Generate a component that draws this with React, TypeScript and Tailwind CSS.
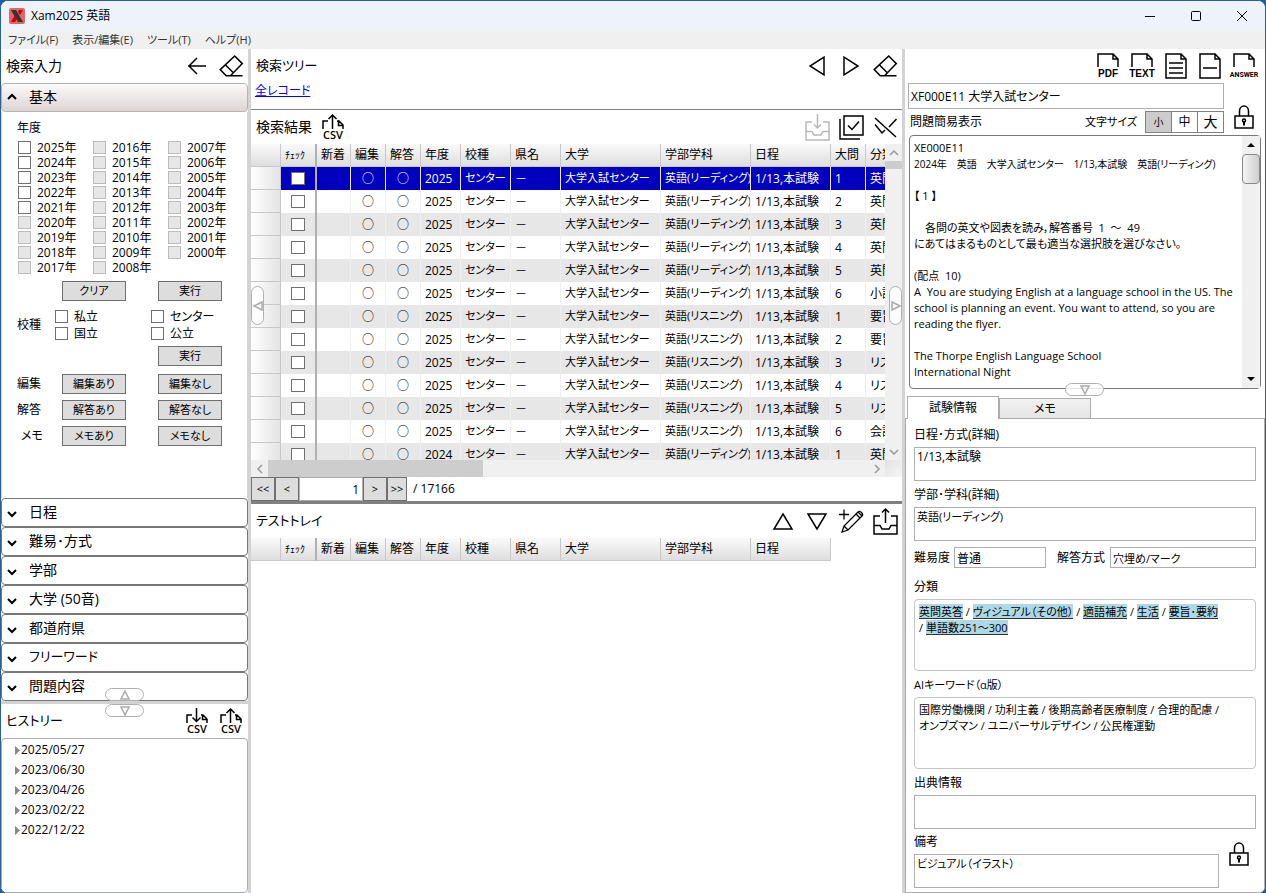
import { useState } from "react";
import type { ReactNode } from "react";
import { clsx } from "clsx";

const YEARS = [
  [2025, 2024, 2023, 2022, 2021, 2020, 2019, 2018, 2017],
  [2016, 2015, 2014, 2013, 2012, 2011, 2010, 2009, 2008],
  [2007, 2006, 2005, 2004, 2003, 2002, 2001, 2000],
];

const SECTIONS = ["日程", "難易･方式", "学部", "大学 (50音)", "都道府県", "フリーワード", "問題内容"];

const HISTORY = ["2025/05/27", "2023/06/30", "2023/04/26", "2023/02/22", "2022/12/22"];

const READING = "英語(リーディング)";
const LISTENING = "英語(リスニング)";

const ROWS = [
  { year: 2025, subject: READING, no: 1, kind: "英問" },
  { year: 2025, subject: READING, no: 2, kind: "英問" },
  { year: 2025, subject: READING, no: 3, kind: "英問" },
  { year: 2025, subject: READING, no: 4, kind: "英問" },
  { year: 2025, subject: READING, no: 5, kind: "英問" },
  { year: 2025, subject: READING, no: 6, kind: "小説" },
  { year: 2025, subject: LISTENING, no: 1, kind: "要旨" },
  { year: 2025, subject: LISTENING, no: 2, kind: "要旨" },
  { year: 2025, subject: LISTENING, no: 3, kind: "リス" },
  { year: 2025, subject: LISTENING, no: 4, kind: "リス" },
  { year: 2025, subject: LISTENING, no: 5, kind: "リス" },
  { year: 2025, subject: LISTENING, no: 6, kind: "会話" },
  { year: 2024, subject: READING, no: 1, kind: "英問" },
];

const TAGS = ["英問英答", "ヴィジュアル（その他）", "適語補充", "生活", "要旨･要約", "単語数251～300"];

const PREVIEW_TITLE = "2024年　英語　大学入試センター　1/13,本試験　英語(リーディング)";

const PREVIEW_BODY = `
【 1 】

　各問の英文や図表を読み，解答番号  1  ～  49
にあてはまるものとして最も適当な選択肢を選びなさい。

(配点  10)
A  You are studying English at a language school in the US. The school is planning an event. You want to attend, so you are reading the flyer.

The Thorpe English Language School
International Night`;

interface IconProps {
  w: number;
  h: number;
  children: ReactNode;
  className?: string;
}

function Icon({ w, h, children, className }: IconProps) {
  return (
    <svg
      width={w}
      height={h}
      viewBox={`0 0 ${w} ${h}`}
      fill="none"
      stroke="currentColor"
      strokeWidth="1.5"
      className={clsx("shrink-0 overflow-visible", className)}
      aria-hidden="true"
    >
      {children}
    </svg>
  );
}

function IconButton({ label, children, disabled }: { label: string; children: ReactNode; disabled?: boolean }) {
  return (
    <button
      type="button"
      aria-label={label}
      disabled={disabled}
      className="flex h-8 w-[34px] items-center justify-center text-black disabled:text-[#b8b8b8]"
    >
      {children}
    </button>
  );
}

function EraserIcon() {
  return (
    <Icon w={24} h={22}>
      <path d="M15.7 1l7.6 7.6L11.5 20.7H7.2L1.2 14.6zM6.3 9.8l8 8M7 20.7h16.5" />
    </Icon>
  );
}

function CsvIcon({ dir }: { dir: "in" | "out" }) {
  return (
    <Icon w={22} h={26}>
      <path d="M1 15V7h5M15 7h2l4 4v4M16.5 7v4.5H21" />
      <path d={dir === "out" ? "M10.5 15V1M6.5 5l4-4 4 4" : "M10.5 0v13M6.5 9.5l4 4 4-4"} />
      <text
        x="11"
        y="25"
        textAnchor="middle"
        fontSize="11"
        fontWeight="600"
        fill="currentColor"
        stroke="none"
        fontFamily="Open Sans, sans-serif"
      >
        CSV
      </text>
    </Icon>
  );
}

function FileTextIcon({ text, size, family }: { text: string; size: number; family: string }) {
  return (
    <Icon w={22} h={26}>
      <path d="M1 14V1h15l5 5v8M16 1v5h5" />
      <text
        x="11"
        y="24"
        textAnchor="middle"
        fontSize={size}
        fontWeight="700"
        fill="currentColor"
        stroke="none"
        fontFamily={family}
      >
        {text}
      </text>
    </Icon>
  );
}

function LockIcon() {
  return (
    <Icon w={20} h={24}>
      <path d="M1 11h18v12H1zM5.5 11V6a4.5 5 0 0 1 9 0v5" />
      <circle cx="10" cy="15.5" r="1.5" />
      <path d="M10 17v3.5" strokeWidth="2" />
    </Icon>
  );
}

function TrayIcon({ dir }: { dir: "in" | "out" }) {
  return (
    <Icon w={25} h={27}>
      <path d="M7 8H1v18h23V8h-6M1 17.5h6l2 3.5h7l2-3.5h6" />
      <path d={dir === "out" ? "M12.5 15V1M9 4.5 12.5 1 16 4.5" : "M12.5 0v14M9 10.5l3.5 3.5 3.5-3.5"} />
    </Icon>
  );
}

const TRIANGLES = {
  left: "M1 5 9 1v8z",
  right: "M9 5 1 1v8z",
  up: "M5 1l4 8H1z",
  down: "M5 9 1 1h8z",
};

function SplitHandle({ dir, className }: { dir: keyof typeof TRIANGLES; className: string }) {
  return (
    <button
      type="button"
      aria-label="パネルの開閉"
      className={clsx(
        "absolute z-10 flex items-center justify-center rounded-full border border-[#b0b0b0] bg-white/80 text-[#aaa]",
        className
      )}
    >
      <Icon w={10} h={10}>
        <path d={TRIANGLES[dir]} />
      </Icon>
    </button>
  );
}

function CheckBox({ label, disabled }: { label: string; disabled?: boolean }) {
  return (
    <label className="flex items-center gap-1.5">
      <input
        type="checkbox"
        disabled={disabled}
        className="h-[13px] w-[13px] appearance-none border border-[#707070] bg-white checked:bg-[#555] disabled:border-[#bcbcbc] disabled:bg-[#e6e6e6]"
      />
      {label}
    </label>
  );
}

function PushButton({ children }: { children: ReactNode }) {
  return (
    <button type="button" className="h-5 w-16 border border-[#707070] bg-[#ddd] text-[11px] leading-[18px]">
      {children}
    </button>
  );
}

function SearchPanel() {
  return (
    <div className="flex h-[386px] flex-col border-x border-[#d3d3d3] pl-[15px]">
      <p className="mt-2 leading-4">年度</p>
      <div className="mt-1 flex">
        {YEARS.map((column) => (
          <div key={column[0]} className="w-[75px] pl-px leading-[15px]">
            {column.map((year) => (
              <CheckBox key={year} label={`${year}年`} disabled={year < 2021} />
            ))}
          </div>
        ))}
      </div>
      <div className="mt-[6px] flex gap-8 pl-[45px]">
        <PushButton>クリア</PushButton>
        <PushButton>実行</PushButton>
      </div>
      <div className="mt-[7px] flex items-center">
        <span className="w-[41px]">校種</span>
        <div className="grid grid-cols-[96px_96px] leading-[17px]">
          <CheckBox label="私立" />
          <CheckBox label="センター" />
          <CheckBox label="国立" />
          <CheckBox label="公立" />
        </div>
      </div>
      <div className="mt-1 flex pl-[141px]">
        <PushButton>実行</PushButton>
      </div>
      <div className="mt-2 flex flex-col gap-1.5">
        {["編集", "解答", "メモ"].map((name) => (
          <div key={name} className="flex items-center gap-8">
            <span className={clsx("-mr-8 w-[45px]", name === "メモ" && "pl-1")}>{name}</span>
            <PushButton>{name}あり</PushButton>
            <PushButton>{name}なし</PushButton>
          </div>
        ))}
      </div>
    </div>
  );
}

function LeftPane() {
  return (
    <aside className="flex w-[247px] shrink-0 flex-col">
      <div className="flex h-[34px] items-center pl-[5px]">
        <h2 className="flex-1 text-sm">検索入力</h2>
        <IconButton label="戻る">
          <Icon w={18} h={18}>
            <path d="M0 9h18M9 1 1 9l8 8" />
          </Icon>
        </IconButton>
        <IconButton label="クリア">
          <EraserIcon />
        </IconButton>
      </div>
      <button
        type="button"
        className="flex h-[29px] items-center rounded-sm border border-[#b5b5b5] bg-gradient-to-b from-[#fbfafa] to-[#dfd4d4] pb-0.5 pl-1.5 text-sm"
      >
        <Icon w={8} h={6} className="mr-[13px]">
          <path d="M0 5l4-4 4 4" strokeWidth="2" />
        </Icon>
        基本
      </button>
      <SearchPanel />
      <div className="relative">
        {SECTIONS.map((name) => (
          <button
            key={name}
            type="button"
            className={clsx(
              "flex h-[29px] w-full items-center rounded-sm border border-[#777] bg-white pb-0.5 pl-1.5",
              name === "フリーワード" ? "text-[13px]" : "text-sm"
            )}
          >
            <Icon w={8} h={6} className="mt-1 mr-[13px]">
              <path d="M0 1l4 4 4-4" strokeWidth="2" />
            </Icon>
            {name}
          </button>
        ))}
        <SplitHandle dir="up" className="bottom-0 left-[104px] h-[13px] w-[39px]" />
      </div>
      <div className="h-[3px] bg-[#d3d3d3]" />
      <div className="relative flex h-[34px] items-center pl-[5px]">
        <SplitHandle dir="down" className="top-0 left-[104px] h-[13px] w-[39px]" />
        <h2 className="flex-1 text-[13px]">ヒストリー</h2>
        <IconButton label="CSV読込">
          <CsvIcon dir="in" />
        </IconButton>
        <IconButton label="CSV出力">
          <CsvIcon dir="out" />
        </IconButton>
      </div>
      <ul className="flex-1 rounded-sm border border-[#abadb3] pt-px pl-3">
        {HISTORY.map((date) => (
          <li key={date} className="flex h-5 items-center gap-px">
            <svg width="6" height="9" viewBox="0 0 6 9" aria-hidden="true">
              <path d="M1 0l5 4.5L1 9z" fill="#888" />
            </svg>
            {date}
          </li>
        ))}
      </ul>
    </aside>
  );
}

const HEAD_CELL =
  "h-[23px] border-r border-b border-[#c8c8c8] bg-gradient-to-b from-[#fafafa] to-[#dedede] pl-1 text-left font-normal";

function GridColumns({ full }: { full: boolean }) {
  return (
    <>
      <colgroup>
        <col className="w-[30px]" />
        <col className="w-[36px]" />
        <col className="w-[34px]" />
        <col className="w-[35px]" />
        <col className="w-[35px]" />
        <col className="w-[40px]" />
        <col className="w-[50px]" />
        <col className="w-[50px]" />
        <col className="w-[100px]" />
        <col className="w-[90px]" />
        <col className="w-[80px]" />
        {full && <col className="w-[35px]" />}
        {full && <col />}
      </colgroup>
      <thead>
        <tr>
          <th className={HEAD_CELL} aria-label="行" />
          <th className={clsx(HEAD_CELL, "border-r-2 border-r-[#b0b0b0]")}>
            <span className="text-[10px]">ﾁｪｯｸ</span>
          </th>
          {["新着", "編集", "解答", "年度", "校種", "県名", "大学", "学部学科", "日程"].map((name) => (
            <th key={name} className={HEAD_CELL}>
              {name}
            </th>
          ))}
          {full && <th className={HEAD_CELL}>大問</th>}
          {full && <th className={HEAD_CELL}>分類</th>}
        </tr>
      </thead>
    </>
  );
}

function ResultGrid() {
  const [selected, setSelected] = useState(0);

  return (
    <div className="grid grid-cols-[minmax(0,1fr)_17px] grid-rows-[316px_17px]">
      <div className="overflow-hidden">
        <table className="w-full min-w-[645px] table-fixed border-separate border-spacing-0 whitespace-nowrap">
          <GridColumns full />
          <tbody>
            {ROWS.map((row, i) => {
              const cell = "h-[23px] overflow-hidden border-r border-[#eee] pl-1";
              return (
                <tr
                  key={i}
                  onClick={() => setSelected(i)}
                  className={clsx(
                    i === selected ? "bg-[#0000be] text-white" : i % 2 ? "bg-white" : "bg-[#e7e7e7]"
                  )}
                >
                  <td className="border-r border-b border-[#c8c8c8] bg-gradient-to-r from-white to-[#e4e4e4]" />
                  <td className="border-r-2 border-[#b0b0b0]">
                    <input
                      type="checkbox"
                      aria-label={`${row.year}年 大問${row.no}`}
                      className="mx-auto block h-[13px] w-[14px] appearance-none border border-[#707070] bg-white checked:bg-[#555]"
                    />
                  </td>
                  <td className={cell} />
                  <td className={clsx(cell, "pr-1 text-center")}>○</td>
                  <td className={clsx(cell, "pr-1 text-center")}>○</td>
                  <td className={cell}>{row.year}</td>
                  <td className={clsx(cell, "text-[11px]")}>センター</td>
                  <td className={cell}>－</td>
                  <td className={clsx(cell, "text-[11px]")}>大学入試センター</td>
                  <td className={clsx(cell, "text-[11px]")}>{row.subject}</td>
                  <td className={cell}>1/13,本試験</td>
                  <td className={cell}>{row.no}</td>
                  <td className={cell}>{row.kind}</td>
                </tr>
              );
            })}
          </tbody>
        </table>
      </div>
      <div className="flex flex-col items-center bg-[#f0f0f0] text-[#999]">
        <Icon w={8} h={17}>
          <path d="M0 11l4-4 4 4" />
        </Icon>
        <div className="h-2 w-full bg-[#cdcdcd]" />
        <Icon w={8} h={17} className="mt-auto">
          <path d="M0 7l4 4 4-4" />
        </Icon>
      </div>
      <div className="flex items-center bg-[#f0f0f0] text-[#999]">
        <Icon w={17} h={8}>
          <path d="M11 0 7 4l4 4" />
        </Icon>
        <div className="h-full w-[215px] bg-[#cdcdcd]" />
        <Icon w={17} h={8} className="ml-auto">
          <path d="M7 0l4 4-4 4" />
        </Icon>
      </div>
      <div className="bg-gradient-to-br from-[#e2e2e2] to-[#f6f6f6]" />
    </div>
  );
}

function MiddlePane() {
  const pager = "h-6 border border-[#707070] bg-[#ddd] text-[11px] leading-5";
  return (
    <main className="relative flex min-w-0 flex-1 flex-col">
      <SplitHandle dir="left" className="top-[237px] left-0 h-[39px] w-[13px]" />
      <SplitHandle dir="right" className="top-[237px] right-0 h-[39px] w-[13px]" />
      <div className="flex h-[34px] items-center pl-[5px]">
        <h2 className="flex-1 text-[13px]">検索ツリー</h2>
        <IconButton label="前へ">
          <Icon w={16} h={20}>
            <path d="M15 1v18L1 10z" />
          </Icon>
        </IconButton>
        <IconButton label="次へ">
          <Icon w={16} h={20}>
            <path d="M1 1v18l14-9z" />
          </Icon>
        </IconButton>
        <IconButton label="クリア">
          <EraserIcon />
        </IconButton>
      </div>
      <div className="h-[27px] border-b border-[#808080] pl-1 leading-4">
        <a href="#all" className="text-[#0000ff] underline">
          全レコード
        </a>
      </div>
      <div className="flex h-[34px] items-center pl-[5px]">
        <h2 className="text-sm">検索結果</h2>
        <div className="ml-1 flex-1">
          <IconButton label="CSV出力">
            <CsvIcon dir="out" />
          </IconButton>
        </div>
        <IconButton label="トレイに入れる" disabled>
          <TrayIcon dir="in" />
        </IconButton>
        <IconButton label="すべて選択">
          <Icon w={25} h={25}>
            <path d="M5 1h19v19H5zM1 4v20h20M9 10.5l4 4 7-8" />
          </Icon>
        </IconButton>
        <IconButton label="選択解除">
          <Icon w={23} h={21}>
            <path d="M1 1l21 19M1 7.5l7 8.5 3-3M15 10l7.5-8" />
          </Icon>
        </IconButton>
      </div>
      <ResultGrid />
      <div className="flex h-6 items-center">
        <button type="button" className={clsx(pager, "w-6")}>
          &lt;&lt;
        </button>
        <button type="button" className={clsx(pager, "w-6")}>
          &lt;
        </button>
        <input
          aria-label="レコード番号"
          defaultValue="1"
          className="h-6 w-16 border border-[#abadb3] bg-white px-[3px] text-right"
        />
        <button type="button" className={clsx(pager, "w-6")}>
          &gt;
        </button>
        <button type="button" className={clsx(pager, "w-5")}>
          &gt;&gt;
        </button>
        <span className="ml-1.5">/ 17166</span>
      </div>
      <div className="h-[3px] bg-[#808080]" />
      <div className="flex h-[34px] items-center pl-[5px]">
        <h2 className="flex-1 text-[13px]">テストトレイ</h2>
        <IconButton label="上へ">
          <Icon w={20} h={17}>
            <path d="M10 1l9 15H1z" />
          </Icon>
        </IconButton>
        <IconButton label="下へ">
          <Icon w={20} h={17}>
            <path d="M10 16 1 1h18z" />
          </Icon>
        </IconButton>
        <IconButton label="新規編集">
          <Icon w={25} h={24}>
            <path d="M0 5.5h10M5 .5v10M3 23l2-6L19 3c2-2 6 2 4 4L9 21zM5 17l4 4M17 5l4 4M19 3l4 4" strokeWidth="1.3" />
          </Icon>
        </IconButton>
        <IconButton label="トレイから出す">
          <TrayIcon dir="out" />
        </IconButton>
      </div>
      <table className="w-[580px] table-fixed border-separate border-spacing-0 whitespace-nowrap">
        <GridColumns full={false} />
      </table>
    </main>
  );
}

const FIELD = "block w-full resize-none border border-[#abadb3] bg-white px-0.5";

function InfoPanel() {
  return (
    <div className="flex-1 border border-[#acacac] px-2 pt-1 pb-1">
      <label htmlFor="schedule" className="block leading-6">
        日程･方式(詳細)
      </label>
      <textarea id="schedule" defaultValue="1/13,本試験" className={clsx(FIELD, "h-[34px] leading-[18px]")} />
      <label htmlFor="faculty" className="mt-0.5 block leading-6">
        学部･学科(詳細)
      </label>
      <textarea
        id="faculty"
        defaultValue={READING}
        className={clsx(FIELD, "h-[34px] text-[11px] leading-[18px]")}
      />
      <div className="mt-1.5 flex items-center">
        <label htmlFor="level" className="w-10 shrink-0">
          難易度
        </label>
        <input id="level" defaultValue="普通" className="h-[21px] w-[92px] border border-[#abadb3] px-0.5" />
        <label htmlFor="format" className="ml-[11px] w-[53px] shrink-0">
          解答方式
        </label>
        <input
          id="format"
          defaultValue="穴埋め/マーク"
          className="h-[21px] min-w-0 flex-1 border border-[#abadb3] px-0.5 text-[11px]"
        />
      </div>
      <p className="mt-[7px] leading-6">分類</p>
      <div className="h-[72px] rounded-sm border border-[#c4c4c4] px-1 pt-1 text-[11px] leading-4">
        {TAGS.map((tag, i) => (
          <span key={tag}>
            {i > 0 && " "}
            <span className="whitespace-nowrap">
              {i > 0 && "/ "}
              <a href="#tag" className="inline-block h-[15px] border-b border-[#333] bg-[#add8e6] leading-[15px]">
                {tag}
              </a>
            </span>
          </span>
        ))}
      </div>
      <p className="mt-0.5 text-[11px] leading-6">AIキーワード（α版）</p>
      <div className="h-[72px] rounded-sm border border-[#c4c4c4] px-1 pt-1 text-[11px] leading-4">
        国際労働機関 / 功利主義 / 後期高齢者医療制度 / 合理的配慮 /<br />
        オンブズマン / ユニバーサルデザイン / 公民権運動
      </div>
      <label htmlFor="source" className="mt-0.5 block leading-6">
        出典情報
      </label>
      <textarea id="source" className={clsx(FIELD, "h-[34px] leading-[18px]")} />
      <div className="mt-px flex">
        <div className="flex-1">
          <label htmlFor="note" className="block leading-6">
            備考
          </label>
          <textarea
            id="note"
            defaultValue="ビジュアル（イラスト）"
            className={clsx(FIELD, "h-[34px] text-[11px] leading-[18px]")}
          />
        </div>
        <button type="button" aria-label="備考をロック" className="mt-3 mr-1.5 ml-2.5 h-6 w-[21px]">
          <LockIcon />
        </button>
      </div>
    </div>
  );
}

function RightPane() {
  const sizeButton = "h-[22px] w-[27px] border border-[#808080] leading-5";
  return (
    <aside className="flex w-[360px] shrink-0 flex-col">
      <div className="flex h-[34px] items-center justify-end pr-1">
        <IconButton label="PDF">
          <FileTextIcon text="PDF" size={10} family="Liberation Sans, sans-serif" />
        </IconButton>
        <IconButton label="テキスト">
          <FileTextIcon text="TEXT" size={10} family="Liberation Sans, sans-serif" />
        </IconButton>
        <IconButton label="問題">
          <Icon w={22} h={26}>
            <path d="M1 1h15l5 5v19H1zM16 1v5h5M4 10h14M4 15h14M4 20h14" />
          </Icon>
        </IconButton>
        <IconButton label="一行">
          <Icon w={22} h={26}>
            <path d="M1 1h15l5 5v19H1zM16 1v5h5M4 15h14" />
          </Icon>
        </IconButton>
        <IconButton label="解答">
          <FileTextIcon text="ANSWER" size={7} family="Roboto, sans-serif" />
        </IconButton>
      </div>
      <div className="flex items-center pl-[3px]">
        <div className="flex-1">
          <input
            aria-label="問題名"
            defaultValue="XF000E11 大学入試センター"
            className="block h-[26px] w-full border border-[#abadb3] px-0.5"
          />
          <div className="mt-0.5 mb-0.5 flex items-center pl-0.5">
            <h2 className="flex-1">問題簡易表示</h2>
            <span className="mr-2 text-[11px]">文字サイズ</span>
            <button type="button" className={clsx(sizeButton, "bg-[#ccc] text-[10px]")}>
              小
            </button>
            <button type="button" className={clsx(sizeButton, "-ml-px text-xs")}>
              中
            </button>
            <button type="button" className={clsx(sizeButton, "-ml-px text-sm")}>
              大
            </button>
          </div>
        </div>
        <button type="button" aria-label="ロック" className="mt-4 mr-2.5 ml-2.5 h-6 w-[21px]">
          <LockIcon />
        </button>
      </div>
      <div className="relative mx-1 flex h-[254px] rounded-sm border border-[#777]">
        <div className="flex-1 overflow-hidden pt-1 pl-1 text-[11px] leading-4">
          <p>XE000E11</p>
          <p className="text-[10px] leading-4 whitespace-nowrap">{PREVIEW_TITLE}</p>
          <p className="pr-2 whitespace-pre-wrap">{PREVIEW_BODY}</p>
        </div>
        <div className="flex w-[18px] flex-col items-center bg-[#f0f0f0]">
          <svg width="8" height="18" viewBox="0 0 8 18" aria-hidden="true">
            <path d="M0 11l4-4 4 4z" />
          </svg>
          <div className="h-[30px] w-full rounded-sm border border-[#8a8a8a] bg-gradient-to-r from-[#f4f4f4] to-[#cfcfcf]" />
          <svg width="8" height="18" viewBox="0 0 8 18" className="mt-auto" aria-hidden="true">
            <path d="M0 7l4 4 4-4z" />
          </svg>
        </div>
        <SplitHandle dir="down" className="-bottom-2 left-[155px] h-[13px] w-[39px]" />
      </div>
      <div role="tablist" className="-mb-px flex items-end pt-[7px] pl-0.5">
        <button
          type="button"
          role="tab"
          aria-selected="true"
          className="z-10 h-[23px] w-[92px] border border-b-0 border-[#acacac] bg-white"
        >
          試験情報
        </button>
        <button
          type="button"
          role="tab"
          aria-selected="false"
          className="h-[21px] w-[92px] border border-[#acacac] bg-gradient-to-b from-[#f2f2f2] to-[#e5e5e5]"
        >
          メモ
        </button>
      </div>
      <InfoPanel />
    </aside>
  );
}

export default function App() {
  return (
    <div
      lang="ja"
      className="flex min-h-screen flex-col bg-[#1f5f9c] font-['Open_Sans','Noto_Sans_CJK_JP',sans-serif] text-xs text-black [font-feature-settings:'palt']"
    >
      <div className="flex flex-1 flex-col overflow-hidden rounded-lg border border-[#2a6298] bg-white">
        <header className="flex h-[30px] shrink-0 items-center bg-[#eef3fb] pl-2">
          <svg width="16" height="16" viewBox="0 0 16 16" aria-hidden="true">
            <rect width="16" height="16" rx="2" fill="#e06666" />
            <path d="M2 2h5l7 12H9z" fill="#333" />
            <path d="M10 2h4l-3 5-2-3z" fill="#d00000" />
            <path d="M2 14h4l2-3-2-4z" fill="#d00000" />
          </svg>
          <h1 className="ml-1.5 flex-1">Xam2025 英語</h1>
          <button type="button" aria-label="最小化" className="flex h-full w-[46px] items-center justify-center">
            <Icon w={10} h={10}>
              <path d="M0 5.5h10" strokeWidth="1" />
            </Icon>
          </button>
          <button type="button" aria-label="最大化" className="flex h-full w-[46px] items-center justify-center">
            <Icon w={10} h={10}>
              <rect x=".5" y=".5" width="9" height="9" rx="1" strokeWidth="1" />
            </Icon>
          </button>
          <button type="button" aria-label="閉じる" className="flex h-full w-[46px] items-center justify-center">
            <Icon w={10} h={10}>
              <path d="M0 0l10 10M10 0 0 10" strokeWidth="1" />
            </Icon>
          </button>
        </header>
        <nav className="flex h-[18px] shrink-0 items-center gap-[14px] bg-[#f0f0f0] pl-[7px] text-[11px] text-[#333]">
          {["ファイル(F)", "表示/編集(E)", "ツール(T)", "ヘルプ(H)"].map((name) => (
            <button key={name} type="button">
              {name}
            </button>
          ))}
        </nav>
        <div className="flex flex-1">
          <LeftPane />
          <div className="w-[3px] shrink-0 bg-[#d3d3d3]" />
          <MiddlePane />
          <div className="w-[3px] shrink-0 bg-[#d3d3d3]" />
          <RightPane />
        </div>
      </div>
    </div>
  );
}
